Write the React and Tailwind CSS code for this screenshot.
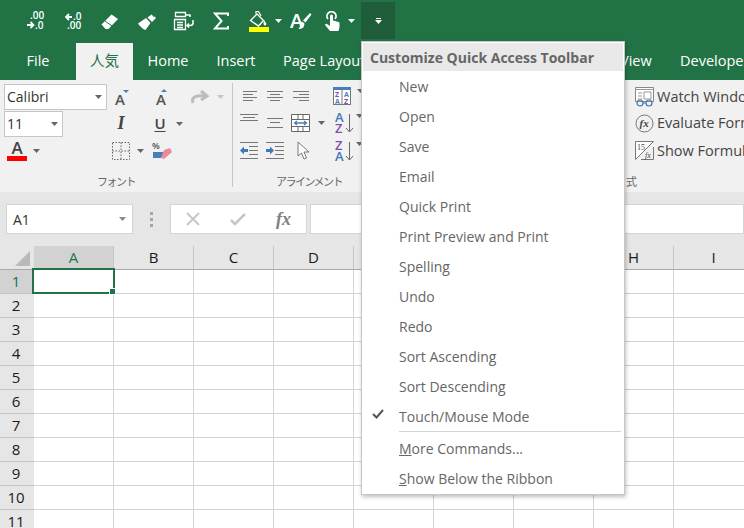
import React from 'react';

const sans = 'font-["Open_Sans","Noto_Sans_CJK_JP",sans-serif]';

const columns = ['A', 'B', 'C', 'D', 'E', 'F', 'G', 'H', 'I'];
const rows = [1, 2, 3, 4, 5, 6, 7, 8, 9, 10, 11];
const menuItems = ['New', 'Open', 'Save', 'Email', 'Quick Print', 'Print Preview and Print', 'Spelling', 'Undo', 'Redo', 'Sort Ascending', 'Sort Descending'];

function Caret({ color = '#666' }) {
  return (
    <svg width="7" height="4" viewBox="0 0 7 4" className="shrink-0">
      <path d="M0 0h7L3.5 4z" fill={color} />
    </svg>
  );
}

function Lines({ d, color = '#777' }) {
  return (
    <svg width="20" height="20" viewBox="0 0 20 20" className="shrink-0">
      <path d={d} stroke={color} strokeWidth="1" fill="none" />
    </svg>
  );
}

function QatButton({ width = 'w-[37px]', gap = 'gap-[7px]', children, caret }) {
  return (
    <div className={`${width} ${gap} h-[37px] flex items-center justify-center`}>
      {children}
      {caret && <Caret color="#fff" />}
    </div>
  );
}

function QuickAccess() {
  return (
    <div className="h-[40px] pl-[17px] pt-[2px] flex text-white">
      <QatButton>
        <svg width="20" height="20" viewBox="0 0 20 20" fill="#fff" fontFamily="Open Sans" fontSize="10" fontWeight="600">
          <text x="4" y="8">.00</text>
          <path d="M1 14h6M4.500 11L7.500 14l-3 3" stroke="#fff" strokeWidth="1.800" fill="none" />
          <text x="9" y="18">.0</text>
        </svg>
      </QatButton>
      <QatButton>
        <svg width="20" height="20" viewBox="0 0 20 20" fill="#fff" fontFamily="Open Sans" fontSize="10" fontWeight="600">
          <path d="M3 6h6M6 3L3 6l3 3" stroke="#fff" strokeWidth="1.800" fill="none" />
          <text x="10" y="9">.0</text>
          <text x="4" y="18">.00</text>
        </svg>
      </QatButton>
      <QatButton>
        <svg width="20" height="20" viewBox="0 0 20 20">
          <path d="M1.500 13.500L11.500 3.500l6.500 4.500-9.500 10H5.500z" fill="#fff" />
          <path d="M5 10l7 5" stroke="#217346" strokeWidth="1" />
        </svg>
      </QatButton>
      <QatButton>
        <svg width="20" height="20" viewBox="0 0 20 20" fill="#fff">
          <path d="M1 12.500L9 7l4.500 5-5 7c-2-.5-6-4-7.500-6.500z" />
          <path d="M10.500 6.500l4-3 2 2-1 1 2-1 1.500 1.500-4 4z" />
        </svg>
      </QatButton>
      <QatButton>
        <svg width="22" height="20" viewBox="0 0 22 20" fill="none" stroke="#fff" strokeWidth="1.300">
          <path d="M2.500 1.500h10v4h-10zM1.500 8.500h11v10h-11zM4 11.500h6M4 14h6M4 16.500h6" />
          <path d="M13 4h4v2M20 9v3c0 2-1 2.500-3 2.500h-3M16 12.500L14 14.500l2 2" strokeWidth="1.500" />
        </svg>
      </QatButton>
      <QatButton>
        <svg width="16" height="18" viewBox="0 0 16 18" fill="none" stroke="#fff" strokeWidth="2">
          <path d="M15 4V1.500H2L8.500 9 2 16.500h13V14" />
        </svg>
      </QatButton>
      <QatButton width="w-[44px]" gap="gap-[5px]" caret>
        <svg width="21" height="22" viewBox="0 0 21 22" className="ml-[8px]">
          <path d="M1.500 10.500L8 4l6.500 6.500-5 5.500z" fill="none" stroke="#fff" strokeWidth="1.400" />
          <path d="M7 4V1.500h2.500L12 6" fill="none" stroke="#fff" strokeWidth="1.200" />
          <path d="M15 10l2.500 4-1.500 2-1.500-2z" fill="#fff" />
          <rect x="0" y="17" width="20" height="5" fill="#ffff00" />
        </svg>
      </QatButton>
      <QatButton width="w-[36px]">
        <svg width="22" height="20" viewBox="0 0 22 20">
          <text x="0" y="17" fontFamily="Open Sans" fontSize="20" fontWeight="600" fill="#fff">A</text>
          <path d="M20 2l1.500 1.500-6 8-2.500-2zM12 10.500l2.500 2c0 3.500-2.500 5.500-6 5.500 2-2 1.500-6 3.500-7.500z" fill="#fff" />
        </svg>
      </QatButton>
      <QatButton width="w-[42px]" gap="gap-[8px]" caret>
        <svg width="15" height="20" viewBox="0 0 15 20" fill="#fff">
          <path d="M3 8a4.500 4.500 0 1 1 7 0" fill="none" stroke="#fff" strokeWidth="1.800" />
          <path d="M5 5a1.500 1.500 0 0 1 3 0v4.500l5.500 1.500a1 1 0 0 1 1 1V16l-1 4H5L.5 14.500a1 1 0 0 1 1.500-1.500L5 15z" />
        </svg>
      </QatButton>
      <div className="w-[34px] h-[37px] bg-[#1e5c3a] flex flex-col items-center justify-center gap-[1px]">
        <div className="w-[5px] h-[1px] bg-white" />
        <Caret color="#fff" />
      </div>
    </div>
  );
}

function Tabs() {
  return (
    <div className="h-[40px] flex text-white text-[14.500px] leading-[42px] whitespace-nowrap overflow-hidden">
      <div className="w-[76px] shrink-0 text-center">File</div>
      <div className="w-[57px] shrink-0 mt-[3px] leading-[36px] text-center bg-[#f1f1f1] text-[#217346]">人気</div>
      <div className="w-[70px] shrink-0 text-center">Home</div>
      <div className="w-[66px] shrink-0 text-center">Insert</div>
      <div className="w-[348px] shrink-0 pl-[14px]">Page Layout</div>
      <div className="w-[63px] shrink-0 pl-[3px]">View</div>
      <div className="shrink-0">Developer</div>
    </div>
  );
}

function Combo({ width, label }) {
  return (
    <div className={`${width} h-[26px] bg-white border border-[#c6c6c6] flex items-center justify-between pl-[2px] pr-[4px] text-[14px] text-[#333]`}>
      <span>{label}</span>
      <Caret />
    </div>
  );
}

function FontGroup() {
  return (
    <div className="w-[233px] shrink-0 border-r border-[#c6c6c6] mt-[3px] mb-[5px] flex flex-col">
      <div className="pl-[4px] h-[27px] shrink-0 flex items-center">
        <Combo width="w-[103px]" label="Calibri" />
        <svg width="18" height="18" viewBox="0 0 18 18" className="ml-[7px]" fontFamily="Open Sans" fontWeight="600">
          <text x="1" y="17" fontSize="15" fill="#555">A</text>
          <path d="M9 2h6l-3 3z" fill="#4a7ebb" />
        </svg>
        <svg width="18" height="18" viewBox="0 0 18 18" className="ml-[21px]" fontFamily="Open Sans" fontWeight="600">
          <text x="3" y="17" fontSize="15" fill="#555">A</text>
          <path d="M8 4h6l-3-3z" fill="#4a7ebb" />
        </svg>
        <svg width="20" height="16" viewBox="0 0 20 16" className="ml-[19px]" fill="none" stroke="#bdbdbd" strokeWidth="3">
          <path d="M3 14c-2-6 3-8 12-7" />
          <path d="M11 2l6 5-6 4" />
        </svg>
        <div className="ml-[7px]"><Caret color="#c6c6c6" /></div>
      </div>
      <div className="pl-[4px] h-[27px] shrink-0 flex items-center">
        <Combo width="w-[59px]" label="11" />
        <span className="ml-[49px] w-[18px] text-center font-['Liberation_Serif'] font-bold italic text-[18px] text-[#444]">I</span>
        <span className="ml-[21px] w-[18px] text-center text-[15px] font-semibold text-[#444] underline underline-offset-2">U</span>
        <div className="ml-[7px]"><Caret /></div>
      </div>
      <div className="pl-[7px] h-[27px] shrink-0 flex items-center">
        <div className="w-[20px] mb-[2px] flex flex-col items-center leading-none">
          <span className="text-[17px] font-semibold text-[#444] leading-[17px]">A</span>
          <div className="w-[20px] h-[5px] bg-[#ff0000]" />
        </div>
        <div className="ml-[6px]"><Caret /></div>
        <svg width="18" height="18" viewBox="0 0 18 18" className="ml-[72px]" fill="none" stroke="#666" strokeDasharray="1.500 1.500">
          <path d="M.5.500h17v17H.5zM9 .5v17M.5 9h17" />
        </svg>
        <div className="ml-[7px]"><Caret /></div>
        <svg width="20" height="20" viewBox="0 0 20 20" className="ml-[8px]">
          <text x="0" y="8" fontFamily="Open Sans" fontSize="9" fontWeight="600" fill="#555">%</text>
          <path d="M1 11h11l-3 6H1z" fill="#4a7ebb" />
          <path d="M12 9l6-2 2 4-8 7-3-1z" fill="#e88b9c" />
        </svg>
      </div>
      <div className="flex-1 flex items-center justify-center text-[11px] tracking-[-1.500px] leading-none text-[#666] pt-[11px]">フォント</div>
    </div>
  );
}

function AlignGroup() {
  return (
    <div className="w-[138px] shrink-0 flex flex-col mt-[3px] mb-[5px] pl-[6px] pr-[8px]">
      <div className="h-[26px] shrink-0 flex items-center gap-[6px]">
        <Lines d="M4 5.500h14M4 8.500h10M4 11.500h14M4 14.500h10" />
        <Lines d="M2 5.500h16M5 8.500h10M2 11.500h16M5 14.500h10" />
        <Lines d="M2 5.500h16M8 8.500h10M2 11.500h16M8 14.500h10" />
        <svg width="18" height="18" viewBox="0 0 18 18" className="ml-[16px] shrink-0" fontFamily="Open Sans" fontSize="7" fontWeight="700">
          <rect x=".5" y=".5" width="17" height="17" fill="#fff" stroke="#777" />
          <rect x="0" y="0" width="18" height="3" fill="#4a7ebb" />
          <path d="M9 3v15" stroke="#777" />
          <text x="2" y="10" fill="#7f4fa8">Z</text><text x="2" y="17" fill="#4a7ebb">A</text>
          <text x="11" y="10" fill="#4a7ebb">A</text><text x="11" y="17" fill="#7f4fa8">Z</text>
        </svg>
        <div className="ml-auto self-start mt-[6px]"><Caret /></div>
      </div>
      <div className="h-[28px] shrink-0 flex items-center gap-[6px]">
        <Lines d="M1 1.500h18M4 4.500h12M1 7.500h18" />
        <Lines d="M2 5.500h16M5 9.500h10M2 14.500h16" />
        <svg width="20" height="20" viewBox="0 0 20 20" className="shrink-0">
          <path d="M.5 1.500h18v17H.5zM.5 6.500h18M.5 13.500h18M7 1.500v5M12 1.500v5M7 13.500v5M12 13.500v5" fill="#fff" stroke="#666" />
          <path d="M3.500 10h12M6 8l-2.500 2L6 12M13 8l2.500 2-2.500 2" stroke="#4a7ebb" strokeWidth="1.300" fill="none" />
        </svg>
        <div className="ml-[1px]"><Caret /></div>
        <div className="ml-[4px]"><SortIcon top="A" bottom="Z" /></div>
        <div className="-ml-[5px] self-start mt-[5px]"><Caret /></div>
      </div>
      <div className="h-[28px] shrink-0 flex items-center gap-[6px]">
        <Indent flip />
        <Indent />
        <svg width="14" height="20" viewBox="0 0 14 20" className="ml-[6px] shrink-0">
          <path d="M1 1v14l3.500-3 2.500 6 2.500-1-2.500-6h5z" fill="#fff" stroke="#777" />
        </svg>
        <div className="ml-[18px]"><SortIcon top="Z" bottom="A" /></div>
        <div className="-ml-[5px] self-start mt-[5px]"><Caret /></div>
      </div>
      <div className="flex-1 flex items-center justify-center text-[11px] tracking-[-1.500px] leading-none text-[#666] pt-[10px] pl-[16px]">アラインメント</div>
    </div>
  );
}

function Indent({ flip }) {
  return (
    <svg width="20" height="20" viewBox="0 0 20 20" className="shrink-0">
      <path d="M1 1.500h18M10 5.500h9M10 9.500h9M10 13.500h9M1 17.500h18" stroke="#777" fill="none" />
      <path d={flip ? 'M1 9.500l4-4V8h4v3H5v2.500z' : 'M9 9.500l-4-4V8H1v3h4v2.500z'} fill="#3f78b5" />
    </svg>
  );
}

function SortIcon({ top, bottom }) {
  return (
    <svg width="20" height="22" viewBox="0 0 20 22" className="shrink-0" fontFamily="Open Sans" fontSize="13" fontWeight="600">
      <text x="0" y="10" fill={top === 'A' ? '#3f78b5' : '#7f4fa8'}>{top}</text>
      <text x="0" y="21" fill={bottom === 'A' ? '#3f78b5' : '#7f4fa8'}>{bottom}</text>
      <path d="M14.500 2v18M11 16l3.500 4 3.500-4" fill="none" stroke="#666" />
    </svg>
  );
}

function FormulaGroup() {
  return (
    <div className="flex flex-col mt-[4px] mb-[5px] text-[14.500px] text-[#444] whitespace-nowrap">
      <div className="h-[26px] shrink-0 flex items-center gap-[3px]">
        <svg width="19" height="20" viewBox="0 0 19 20" fill="none" className="shrink-0">
          <path d="M.5.500h18v14H.5z" fill="#fff" stroke="#888" />
          <path d="M.5 2.500h18M3 6h4M3 9h4M3 12h4M9 5h7v7H9z" stroke="#999" />
          <circle cx="5" cy="16" r="3" stroke="#3f78b5" strokeWidth="1.200" />
          <circle cx="14" cy="16" r="3" stroke="#3f78b5" strokeWidth="1.200" />
          <path d="M8 16h3" stroke="#3f78b5" />
        </svg>
        <span>Watch Window</span>
      </div>
      <div className="h-[26px] shrink-0 flex items-center gap-[3px]">
        <svg width="19" height="19" viewBox="0 0 19 19" fill="none" className="shrink-0">
          <circle cx="9.500" cy="9.500" r="8.500" stroke="#777" />
          <text x="4.500" y="13" fontFamily="Liberation Serif" fontStyle="italic" fontWeight="700" fontSize="11" fill="#444">fx</text>
        </svg>
        <span>Evaluate Formula</span>
      </div>
      <div className="h-[29px] shrink-0 flex items-center gap-[3px]">
        <svg width="19" height="19" viewBox="0 0 19 19" fill="none" className="shrink-0">
          <path d="M.5.500h18L.5 18.500z" fill="#fff" stroke="#777" />
          <path d="M18.500 18.500V6M18.500 18.500H6" stroke="#777" />
          <text x="2" y="9" fontFamily="Liberation Serif" fontSize="8" fill="#444">15</text>
          <text x="10" y="17" fontFamily="Liberation Serif" fontStyle="italic" fontSize="8" fill="#444">fx</text>
        </svg>
        <span>Show Formulas</span>
      </div>
      <div className="flex-1 flex items-center text-[11px] leading-none text-[#666] -ml-[9px] pt-[10px]">式</div>
    </div>
  );
}

function Ribbon() {
  return (
    <div className="h-[112px] bg-[#f1f1f1] flex overflow-hidden">
      <FontGroup />
      <AlignGroup />
      <div className="w-[264px] shrink-0" />
      <FormulaGroup />
    </div>
  );
}

function FormulaBar() {
  return (
    <div className="h-[54px] bg-[#e6e6e6] pt-[12px] pl-[6px] flex items-start">
      <div className="w-[127px] h-[30px] bg-white border border-[#d4d4d4] flex items-center justify-between pl-[6px] pr-[6px] text-[14px] text-[#333]">
        A1
        <Caret color="#888" />
      </div>
      <div className="w-[37px] h-[30px] flex flex-col items-center justify-center gap-[3px]">
        <div className="w-[3px] h-[3px] bg-[#a6a6a6]" />
        <div className="w-[3px] h-[3px] bg-[#a6a6a6]" />
        <div className="w-[3px] h-[3px] bg-[#a6a6a6]" />
      </div>
      <div className="w-[137px] h-[30px] bg-white border border-[#d4d4d4] flex items-center pl-[15px] gap-[30px]">
        <svg width="14" height="14" viewBox="0 0 14 14"><path d="M1 1l12 12M13 1L1 13" stroke="#c6c6c6" strokeWidth="1.800" /></svg>
        <svg width="16" height="14" viewBox="0 0 16 14"><path d="M1 8l4 4L15 2" fill="none" stroke="#c6c6c6" strokeWidth="2.500" /></svg>
        <span className="font-['Liberation_Serif'] italic font-bold text-[18px] text-[#808080]">fx</span>
      </div>
      <div className="ml-[3px] flex-1 h-[30px] bg-white border border-[#d4d4d4]" />
    </div>
  );
}

function Sheet() {
  return (
    <div className="relative flex-1 bg-white overflow-hidden text-[15px] text-[#1a1a1a]">
      <div className="flex h-[24px] bg-[#e6e6e6] border-b border-[#a9a9a9]">
        <div className="w-[34px] shrink-0 flex items-end justify-end pr-[4px] pb-[3px]">
          <svg width="15" height="15" viewBox="0 0 15 15"><path d="M15 0v15H0z" fill="#b9b9b9" /></svg>
        </div>
        {columns.map((c) => (
          <div
            key={c}
            className={`w-[80px] shrink-0 flex items-center justify-center border-r border-[#c6c6c6] ${c === 'A' ? 'bg-[#d2d2d2] text-[#217346]' : ''}`}
          >
            {c}
          </div>
        ))}
      </div>
      {rows.map((r) => (
        <div key={r} className="flex h-[24px]">
          <div className={`w-[34px] shrink-0 flex items-center justify-center border-b border-[#c6c6c6] pr-[2px] ${r === 1 ? 'bg-[#d2d2d2] text-[#217346]' : 'bg-[#e6e6e6]'}`}>
            {r}
          </div>
          {columns.map((c) => (
            <div key={c} className="w-[80px] shrink-0 border-r border-b border-[#d4d4d4]" />
          ))}
        </div>
      ))}
      <div className="absolute left-[32px] top-[22px] w-[83px] h-[26px] border-2 border-[#217346]">
        <div className="absolute -right-[3px] -bottom-[3px] w-[5px] h-[5px] bg-[#217346] border border-white box-content" />
      </div>
    </div>
  );
}

function QuickAccessMenu() {
  return (
    <div className="absolute left-[361px] top-[41px] w-[264px] h-[454px] bg-white border border-[#c6c6c6] shadow-[1px_2px_4px_rgba(0,0,0,0.25)] p-[1px] text-[14px] text-[#666]">
      <div className="h-[28px] bg-[#e9e9e9] pl-[7px] flex items-center font-bold text-[14px]">Customize Quick Access Toolbar</div>
      {menuItems.map((item) => (
        <div key={item} className="h-[30px] pl-[36px] flex items-center">{item}</div>
      ))}
      <div className="h-[30px] pl-[36px] flex items-center relative">
        <svg width="12" height="10" viewBox="0 0 12 10" className="absolute left-[9px] top-[8px]">
          <path d="M1 5l3.500 3.500L11 1" fill="none" stroke="#555" strokeWidth="2" />
        </svg>
        Touch/Mouse Mode
      </div>
      <div className="ml-[36px] mr-[2px] h-[1px] bg-[#d4d4d4]" />
      <div className="h-[32px] pl-[36px] flex items-center"><span><span className="underline">M</span>ore Commands...</span></div>
      <div className="h-[30px] -mt-[1px] pl-[36px] flex items-center"><span><span className="underline">S</span>how Below the Ribbon</span></div>
    </div>
  );
}

export default function App() {
  return (
    <div className={`relative w-[744px] h-[528px] overflow-hidden flex flex-col ${sans}`}>
      <div className="bg-[#217346]">
        <QuickAccess />
        <Tabs />
      </div>
      <Ribbon />
      <FormulaBar />
      <Sheet />
      <QuickAccessMenu />
    </div>
  );
}
